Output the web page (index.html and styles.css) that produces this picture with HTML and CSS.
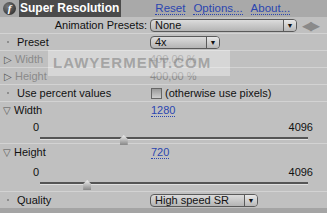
FILE: index.html
```html
<!DOCTYPE html>
<html lang="en">
<head>
    <meta charset="UTF-8">
    <title>Super Resolution</title>
    <link rel="stylesheet" href="styles.css">
</head>
<body>
    <div class="panel">
        <!-- Effect header -->
        <div class="header">
            <span class="fx">f</span>
            <span class="title">Super Resolution</span>
            <a class="link reset">Reset</a>
            <a class="link">Options...</a>
            <a class="link">About...</a>
        </div>

        <div class="row presets">
            <div class="label right">Animation Presets:</div>
            <div class="value">
                <div class="select wide"><span>None</span><i class="drop">&#9660;</i></div>
                <span class="nav">&#9664;&#9654;</span>
            </div>
        </div>

        <div class="row">
            <div class="label"><span class="dot"></span>Preset</div>
            <div class="value">
                <div class="select small"><span>4x</span><i class="drop">&#9660;</i></div>
            </div>
        </div>

        <div class="row dim">
            <div class="label"><span class="tw">&#9655;</span>Width</div>
            <div class="value">400,00 %</div>
        </div>

        <div class="row dim">
            <div class="label"><span class="tw">&#9655;</span>Height</div>
            <div class="value">400,00 %</div>
        </div>

        <div class="row">
            <div class="label"><span class="dot"></span>Use percent values</div>
            <div class="value"><span class="check"></span>(otherwise use pixels)</div>
        </div>

        <div class="row open">
            <div class="label"><span class="tw">&#9661;</span>Width</div>
            <div class="value"><a class="num">1280</a></div>
        </div>
        <div class="slider-row">
            <div class="ends"><span>0</span><span>4096</span></div>
            <div class="track"><span class="thumb" style="left: 31.25%"></span></div>
        </div>

        <div class="row open">
            <div class="label"><span class="tw">&#9661;</span>Height</div>
            <div class="value"><a class="num">720</a></div>
        </div>
        <div class="slider-row tall">
            <div class="ends"><span>0</span><span>4096</span></div>
            <div class="track"><span class="thumb" style="left: 17.6%"></span></div>
        </div>

        <div class="row">
            <div class="label"><span class="dot"></span>Quality</div>
            <div class="value">
                <div class="select mid"><span>High speed SR</span><i class="drop">&#9660;</i></div>
            </div>
        </div>

        <div class="footer"></div>

        <div class="watermark">LAWYERMENT.COM</div>
    </div>
</body>
</html>
```

FILE: styles.css
```css
body {
    margin: 0;
    background: #bdbdbd;
    font-family: 'Liberation Sans', Arial, sans-serif;
    font-size: 11px;
    color: #111;
}
.panel {
    position: relative;
    width: 327px;
    height: 213px;
    overflow: hidden;
    background: #c0c0c0;
}
.header {
    display: flex;
    align-items: center;
    height: 17px;
    background: #a9a9a9;
}
.fx {
    width: 13px;
    height: 13px;
    margin: 0 3px 0 3px;
    border-radius: 50%;
    background: radial-gradient(circle at 35% 35%, #777, #222);
    color: #fff;
    font: italic bold 11px 'Liberation Serif', serif;
    text-align: center;
    line-height: 13px;
}
.title {
    background: #4b4b4b;
    color: #fff;
    font-weight: bold;
    font-size: 12px;
    padding: 1px 2px 2px 1px;
    height: 14px;
    line-height: 14px;
}
.link {
    color: #2b46b0;
    border-bottom: 1px dotted #2b46b0;
    font-size: 11.5px;
    line-height: 12px;
    margin-right: 8px;
}
.reset {
    margin-left: 34px;
}
.row {
    display: flex;
    align-items: center;
    height: 16px;
    border-top: 1px solid #d3d3d3;
}
.presets {
    border-top: none;
}
.label {
    width: 150px;
    display: flex;
    align-items: center;
    padding-left: 4px;
    box-sizing: border-box;
}
.label.right {
    justify-content: flex-end;
    padding-right: 3px;
}
.value {
    display: flex;
    align-items: center;
    flex: 1;
}
.dot {
    width: 2px;
    height: 2px;
    background: #8e8e8e;
    margin: 0 8px 0 3px;
}
.tw {
    width: 11px;
    color: #555;
    font-size: 10px;
    font-family: 'DejaVu Sans', sans-serif;
}
.dim {
    color: #8a8a8a;
}
.select {
    display: flex;
    align-items: center;
    justify-content: space-between;
    height: 13px;
    border: 1px solid #5a5a5a;
    border-radius: 4px;
    background: linear-gradient(#dcdcdc, #b4b4b4);
    padding-left: 4px;
    box-sizing: border-box;
}
.select.wide { width: 147px; }
.select.small { width: 70px; }
.select.mid { width: 108px; }
.drop {
    font-style: normal;
    font-size: 7px;
    width: 12px;
    height: 11px;
    line-height: 11px;
    text-align: center;
    border-left: 1px solid #5a5a5a;
    background: linear-gradient(#e8e8e8, #b8b8b8);
    border-radius: 0 3px 3px 0;
}
.nav {
    margin-left: 5px;
    color: #8a8a8a;
    font-size: 13px;
    letter-spacing: -2px;
    font-family: 'DejaVu Sans', sans-serif;
}
.check {
    width: 11px;
    height: 11px;
    border: 1px solid #666;
    background: linear-gradient(#9a9a9a, #cfcfcf);
    box-sizing: border-box;
    margin: 0 3px 0 1px;
}
.num {
    color: #2b46b0;
    border-bottom: 1px dotted #2b46b0;
    line-height: 12px;
    margin-left: 1px;
}
.open .label {
    padding-left: 3px;
}
.slider-row {
    height: 25px;
    padding: 3px 14px 0 33px;
    box-sizing: border-box;
}
.slider-row.tall {
    height: 31px;
    padding-top: 6px;
}
.ends {
    display: flex;
    justify-content: space-between;
    line-height: 12px;
}
.track {
    position: relative;
    margin: 4px 5px 0 7px;
    height: 2px;
    background: #555;
    border-bottom: 1px solid #e0e0e0;
}
.thumb {
    position: absolute;
    top: -2px;
    width: 8px;
    height: 10px;
    margin-left: -4px;
    background: linear-gradient(#eee, #888);
    clip-path: polygon(50% 0, 100% 40%, 100% 100%, 0 100%, 0 40%);
}
.footer {
    height: 5px;
    background: #a4a4a4;
}
.watermark {
    position: absolute;
    left: 48px;
    top: 50px;
    width: 182px;
    height: 26px;
    background: rgba(255, 255, 255, 0.35);
    color: rgba(120, 120, 120, 0.55);
    font-size: 15px;
    font-weight: bold;
    letter-spacing: 1px;
    line-height: 26px;
    padding-left: 5px;
    box-sizing: border-box;
}
```
